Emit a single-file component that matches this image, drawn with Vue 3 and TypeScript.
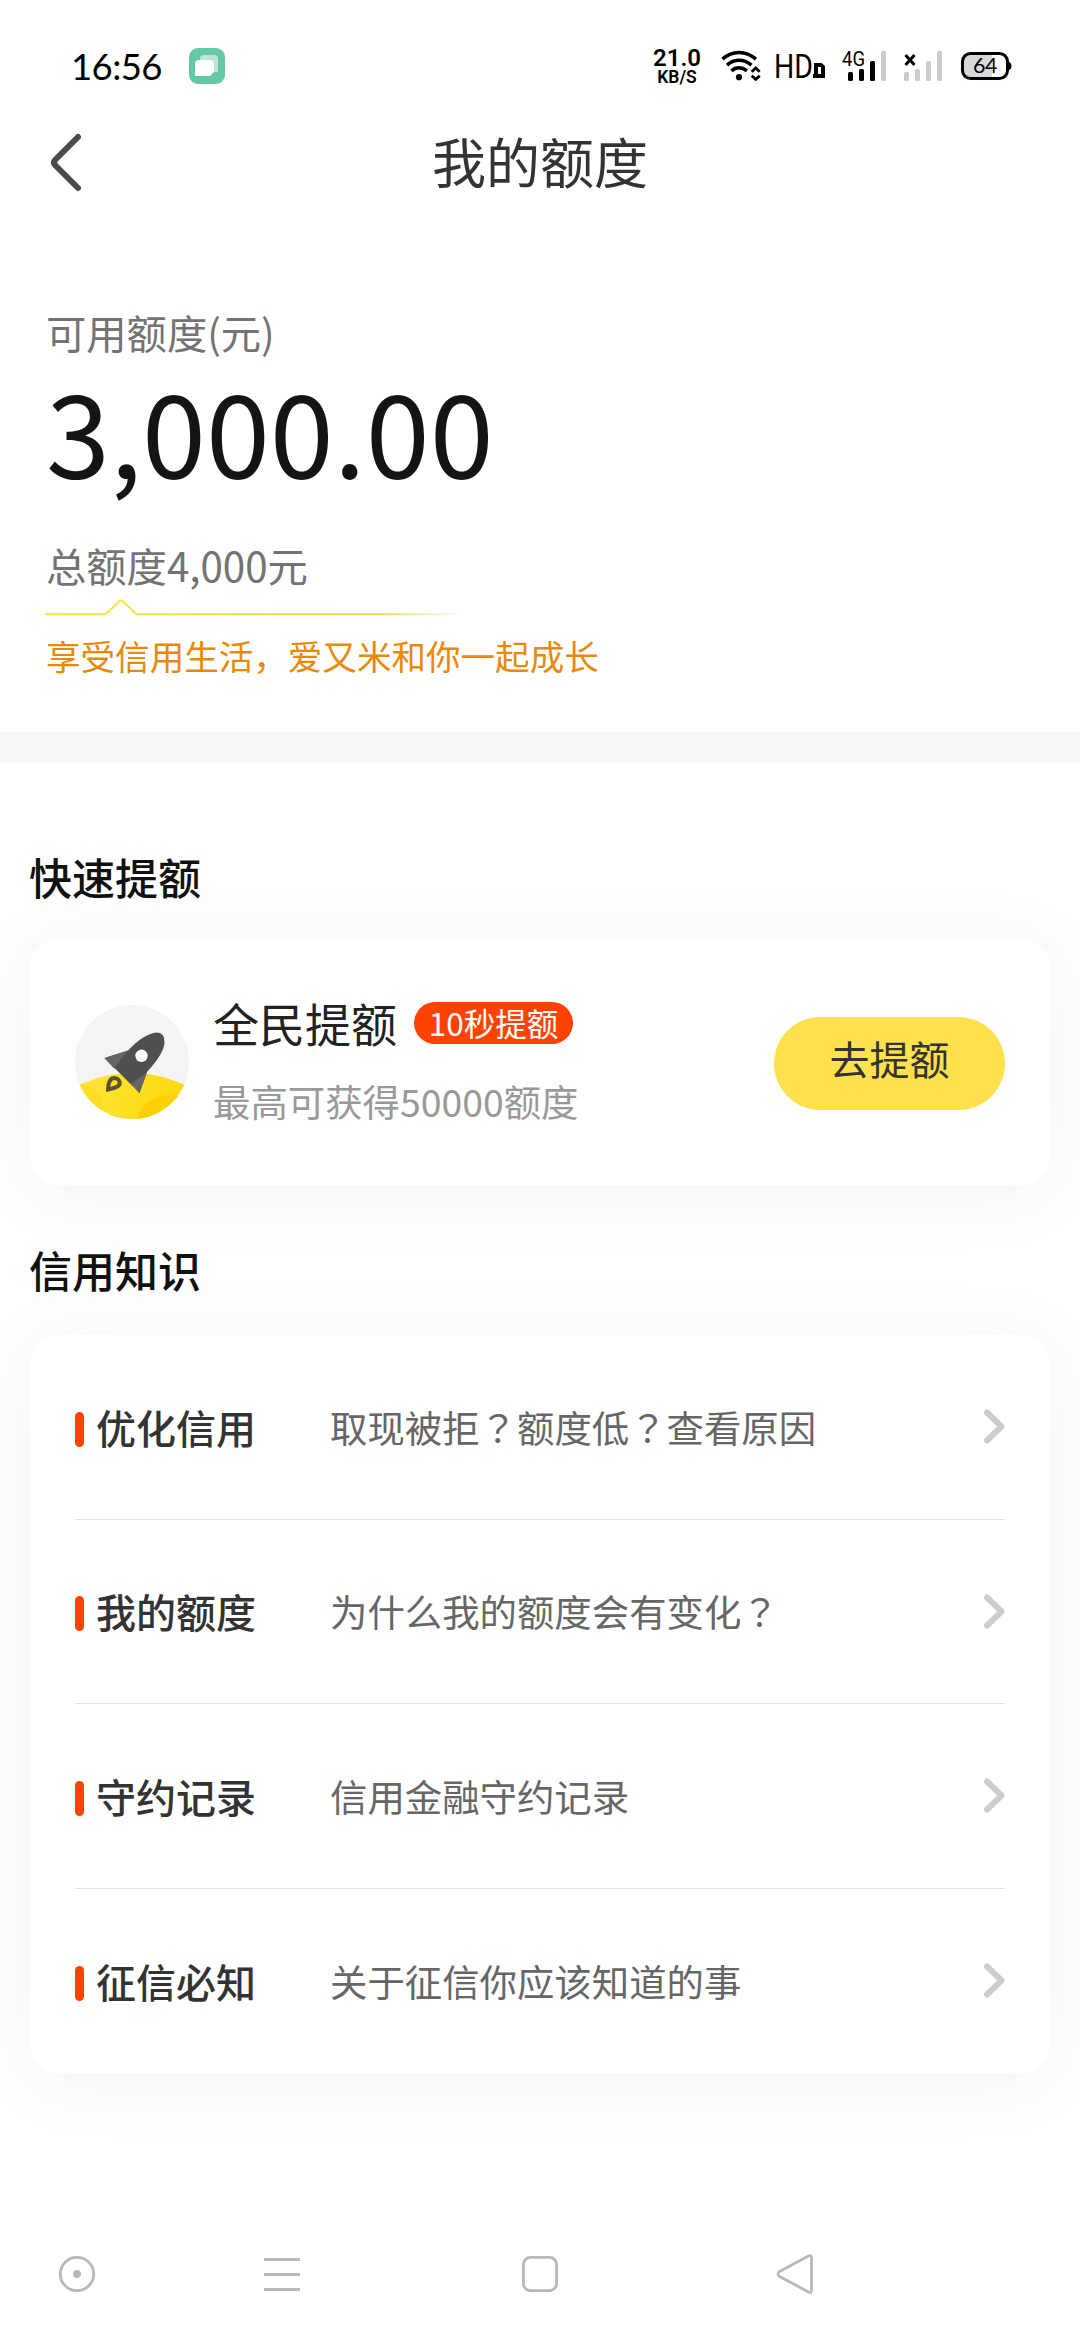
<script setup lang="ts">
interface Article {
  label: string
  desc: string
}

const articles: Article[] = [
  { label: '优化信用', desc: '取现被拒？额度低？查看原因' },
  { label: '我的额度', desc: '为什么我的额度会有变化？' },
  { label: '守约记录', desc: '信用金融守约记录' },
  { label: '征信必知', desc: '关于征信你应该知道的事' },
]

// Question marks are set apart so that they can be centred in their cell.
const parts = (text: string): string[] => text.split(/(？)/).filter(Boolean)
</script>

<template>
  <div class="page">
    <div class="status">
      <span class="time">16:56</span>
      <svg class="app-icon" width="36" height="36" viewBox="0 0 36 36">
        <rect width="36" height="36" rx="9" fill="#64c9a8" />
        <path d="M11 14V11a4 4 0 0 1 4-4h10a4 4 0 0 1 4 4v13h-5V14z" fill="#bce6d8" />
        <path d="M10 12h11a4 4 0 0 1 4 4v8l-4 4H6V16a4 4 0 0 1 4-4z" fill="#fff" />
      </svg>
      <div class="indicators">
        <div class="speed">
          <span class="rate">21.0</span>
          <span class="unit">KB/S</span>
        </div>
        <svg class="wifi" width="40" height="32" viewBox="0 0 40 32" fill="none" stroke="#000">
          <path d="M1.5 9.2Q9 2.5 18 2.5T35 9.2" stroke-width="3.6" />
          <path d="M6 15.2Q11.5 10.3 18 10.3T30.5 15.2" stroke-width="3.6" />
          <path d="M10.5 20.8Q14 17.8 18 17.8T26 20.8" stroke-width="3.6" />
          <circle cx="18" cy="27.2" r="3.1" fill="#000" stroke="none" />
          <path d="M30.7 21.7l4-3.7 4 3.7M30.7 25.7l4 3.7 4-3.7" stroke-width="2.8" />
        </svg>
        <svg class="hd" width="50" height="26" viewBox="0 0 50 26">
          <text x="-2" y="25" font-size="33.500" textLength="39" lengthAdjust="spacingAndGlyphs">HD</text>
          <path fill-rule="evenodd" d="M38 10h7.500l3.500 3v12H37v-4h1zM42 14v7h3v-7z" />
        </svg>
        <svg class="signal" width="46" height="32" viewBox="0 0 46 32">
          <text x="0" y="15.500" font-size="20.500" textLength="23" lengthAdjust="spacingAndGlyphs">4G</text>
          <rect x="6" y="22" width="5" height="9" rx="1.500" />
          <rect x="17" y="19" width="5" height="12" rx="1.500" />
          <rect x="28" y="11" width="5" height="20" rx="1.500" />
          <rect x="39" y="1" width="5" height="30" rx="1.500" fill="#ccc" />
        </svg>
        <svg class="signal-off" width="40" height="32" viewBox="0 0 40 32" fill="#ccc">
          <path d="M1.500 5l9 10M10.500 5l-9 10" stroke="#000" stroke-width="3" />
          <rect x="0" y="22" width="5" height="9" rx="1.500" />
          <rect x="11" y="19" width="5" height="12" rx="1.500" />
          <rect x="22" y="11" width="5" height="20" rx="1.500" />
          <rect x="33" y="1" width="5" height="30" rx="1.500" />
        </svg>
        <svg class="battery" width="51" height="28" viewBox="0 0 51 28">
          <path d="M9 1.500h22v25H9a7.500 7.500 0 0 1-7.500-7.500V9A7.500 7.500 0 0 1 9 1.500z" fill="#d8d8d8" />
          <rect x="1.500" y="1.500" width="45" height="25" rx="8" fill="none" stroke="#000" stroke-width="3" />
          <path d="M47 9.500q3.500 1 3.500 4.500t-3.500 4.500z" />
          <text x="12" y="21" font-size="21.500" textLength="24.500">64</text>
        </svg>
      </div>
    </div>

    <header class="header">
      <svg class="back" width="34" height="62" viewBox="0 0 34 62" fill="none" stroke="#4a4a4a" stroke-width="6" stroke-linecap="round" stroke-linejoin="round">
        <path d="M29 5L6.500 27.500Q3.500 30.500 6.500 33.500L29 56" />
      </svg>
      <h1 class="title">我的额度</h1>
    </header>

    <section class="quota">
      <div class="muted">可用额度(元)</div>
      <div class="amount">3,000.00</div>
      <div class="muted total">总额度4,000元</div>
      <svg class="rule" width="420" height="18" viewBox="0 0 420 18" fill="none">
        <defs>
          <linearGradient id="fade" gradientUnits="userSpaceOnUse" x1="0" y1="0" x2="420" y2="0">
            <stop offset="0" stop-color="#f5ea3c" />
            <stop offset="0.45" stop-color="#f0dc4a" />
            <stop offset="0.8" stop-color="#e8d24e" stop-opacity="0.9" />
            <stop offset="1" stop-color="#e8d24e" stop-opacity="0" />
          </linearGradient>
        </defs>
        <path d="M0 15.300H59.500Q61 15.300 62 14L74 2.500Q76 .8 78 2.500L90 14Q91 15.300 92.500 15.300H420" stroke="url(#fade)" stroke-width="2" />
      </svg>
      <div class="slogan">享受信用生活，爱又米和你一起成长</div>
    </section>

    <div class="band"></div>

    <h2 class="heading first">快速提额</h2>
    <section class="card boost">
      <svg class="rocket" width="114" height="114" viewBox="0 0 114 114">
        <defs>
          <clipPath id="disc"><circle cx="57" cy="57" r="57" /></clipPath>
          <linearGradient id="sun" gradientUnits="userSpaceOnUse" x1="0" y1="70" x2="114" y2="100">
            <stop offset="0" stop-color="#ffe83c" />
            <stop offset="1" stop-color="#ffd60a" />
          </linearGradient>
        </defs>
        <g clip-path="url(#disc)">
          <rect width="114" height="114" fill="#f4f4f4" />
          <circle cx="57" cy="187" r="119" fill="url(#sun)" />
          <circle cx="4" cy="103" r="24" fill="#ffd91a" opacity=".55" />
          <ellipse cx="94" cy="118" rx="32" ry="28" fill="#ffd000" />
        </g>
        <path d="M29.500 53L53 45.500Q69 28.500 82 27.500Q90 27.500 89.500 38Q88.500 49 72 67L64.500 88z" fill="#4f4f4f" />
        <path d="M29.500 53L53 45.500L39 63.500z" fill="#656565" />
        <path d="M72 67L64.500 88L56 79z" fill="#656565" />
        <circle cx="66.500" cy="50.800" r="6.200" fill="#fff" />
        <path d="M33 84.500Q33.500 73 39.500 73Q45.500 74 44.500 79.500Q43 82.500 33 84.500z" fill="none" stroke="#5c5230" stroke-width="4" />
      </svg>
      <div class="boost-text">
        <div class="boost-head">
          <span class="boost-title">全民提额</span>
          <span class="badge">10秒提额</span>
        </div>
        <div class="boost-desc">最高可获得50000额度</div>
      </div>
      <button class="cta">去提额</button>
    </section>

    <h2 class="heading second">信用知识</h2>
    <section class="card list">
      <div v-for="item in articles" :key="item.label" class="row">
        <i class="mark"></i>
        <span class="label">{{ item.label }}</span>
        <span class="desc"><span v-for="(part, i) in parts(item.desc)" :key="i" :class="{ ask: part === '？' }">{{ part }}</span></span>
        <svg class="chevron" width="21" height="35" viewBox="0 0 21 35" fill="none" stroke="#ccc" stroke-width="6" stroke-linecap="round" stroke-linejoin="round">
          <path d="M3 3.500L17.500 17.500L3 31.500" />
        </svg>
      </div>
    </section>

    <nav class="nav">
      <svg width="40" height="44" viewBox="0 0 40 44" fill="none" stroke="#b8b8b8" stroke-width="2.800">
        <circle cx="20" cy="22" r="16.700" />
        <circle cx="20" cy="22" r="4" fill="#b8b8b8" stroke="none" />
      </svg>
      <svg width="40" height="44" viewBox="0 0 40 44" stroke="#b8b8b8" stroke-width="2.800">
        <path d="M2 7.500h36M2 22.500h36M2 37.500h36" />
      </svg>
      <svg width="40" height="44" viewBox="0 0 40 44" fill="none" stroke="#b8b8b8" stroke-width="2.800">
        <rect x="3.400" y="5.400" width="33.200" height="33.200" rx="7" />
      </svg>
      <svg width="40" height="44" viewBox="0 0 40 44" fill="none" stroke="#b8b8b8" stroke-width="2.800" stroke-linejoin="round">
        <path d="M2.500 19.500L31.500 4Q34.500 2.500 34.500 6V38Q34.500 41.500 31.500 40L2.500 24.500Q-.5 22 2.500 19.500z" transform="translate(2 0)" />
      </svg>
    </nav>
  </div>
</template>

<style>
body {
  background: #fff;
}
</style>

<style scoped>
.page {
  display: flex;
  flex-direction: column;
  width: 1080px;
  height: 2340px;
  overflow: hidden;
  background: #fff;
  color: #333;
  font-family: "Noto Sans CJK SC", sans-serif;
}
.page svg {
  display: block;
  flex: none;
  overflow: visible;
}
.status {
  display: flex;
  align-items: center;
  height: 132px;
  padding: 0 68px 0 71px;
  color: #000;
}
.time {
  width: 118px;
  font: 36.5px/44px Lato, sans-serif;
  letter-spacing: -0.6px;
  white-space: nowrap;
}
.indicators {
  display: flex;
  align-items: center;
  margin-left: auto;
}
.speed {
  display: flex;
  flex-direction: column;
  align-items: center;
  width: 50px;
  margin-right: 19px;
  padding-top: 2px;
  font-family: Roboto, sans-serif;
  font-weight: 600;
}
.rate {
  font-size: 24px;
  line-height: 20px;
}
.unit {
  font-size: 17.5px;
  line-height: 19px;
}
.wifi {
  margin-right: 15px;
}
.hd {
  margin-right: 16px;
  font-family: Roboto, sans-serif;
}
.signal {
  margin-right: 16px;
  font-family: Roboto, sans-serif;
}
.signal-off {
  margin-right: 17px;
}
.battery {
  font-family: Lato, sans-serif;
}
.header {
  display: grid;
  grid-template-columns: 34px 1fr 34px;
  height: 62px;
  padding: 0 49px;
}
.title {
  margin: 0;
  color: #333;
  font-size: 54px;
  font-weight: 400;
  line-height: 57px;
  text-align: center;
}
.quota {
  padding: 109px 45px 51px;
}
.muted {
  padding-left: 1px;
  color: #737373;
  font-size: 40.3px;
  line-height: 58px;
}
.amount {
  margin-top: 1px;
  padding-left: 1px;
  color: #141414;
  font-size: 115.2px;
  line-height: 134px;
}
.total {
  margin-top: 40px;
}
.rule {
  margin-top: 5px;
}
.slogan {
  margin-top: 13px;
  padding: 0 0 1px 1px;
  color: #e8890c;
  font-size: 34.56px;
  line-height: 50px;
}
.band {
  height: 30px;
  background: #f7f7f7;
}
.heading {
  margin: 0 29px;
  color: #111;
  font-size: 43px;
  font-weight: 500;
  line-height: 60px;
}
.first {
  margin-top: 84px;
}
.second {
  margin-top: 54px;
}
.card {
  margin: 0 30px;
  padding: 0 45px;
  border-radius: 29px;
  background: #fff;
  box-shadow: 0 8px 80px rgba(20, 40, 90, 0.065);
}
.boost {
  display: flex;
  align-items: center;
  height: 246px;
  margin-top: 33px;
}
.boost-text {
  margin-left: 24px;
  padding-bottom: 5px;
}
.boost-head {
  display: flex;
  align-items: center;
}
.boost-title {
  color: #222;
  font-size: 46px;
  line-height: 58px;
  padding-bottom: 2px;
}
.badge {
  width: 159px;
  height: 42px;
  margin-left: 17px;
  border-radius: 21px;
  background: #ff4200;
  color: #fff;
  font-size: 31.5px;
  line-height: 40px;
  text-align: center;
}
.boost-desc {
  margin-top: 23px;
  color: #999;
  font-size: 37.4px;
  line-height: 50px;
}
.cta {
  width: 231px;
  height: 93px;
  margin-left: auto;
  padding: 0 0 11px;
  border: 0;
  border-radius: 47px;
  background: #ffe14d;
  color: #333;
  font: 40px/82px "Noto Sans CJK SC", sans-serif;
  position: relative;
  top: 1px;
}
.list {
  height: 738px;
  margin-top: 36px;
}
.row {
  display: flex;
  align-items: center;
  box-sizing: border-box;
  height: 184.5px;
  border-bottom: 1px solid #e2e2e2;
}
.row:last-child {
  border-bottom: 0;
}
.mark {
  width: 9px;
  height: 35px;
  margin-top: 5px;
  border-radius: 4.5px;
  background: #ff4200;
}
.label {
  width: 234px;
  margin-left: 12px;
  font-size: 40px;
  font-weight: 500;
  line-height: 58px;
}
.desc {
  color: #666;
  font-size: 37.4px;
  line-height: 58px;
}
.ask {
  font-family: "Noto Sans CJK TC", "Noto Sans CJK JP", sans-serif;
}
.chevron {
  margin-left: auto;
}
.nav {
  display: grid;
  grid-template-columns: 205px 258px 255px 40px;
  align-items: center;
  height: 132px;
  margin-top: auto;
  padding-left: 57px;
}
</style>
